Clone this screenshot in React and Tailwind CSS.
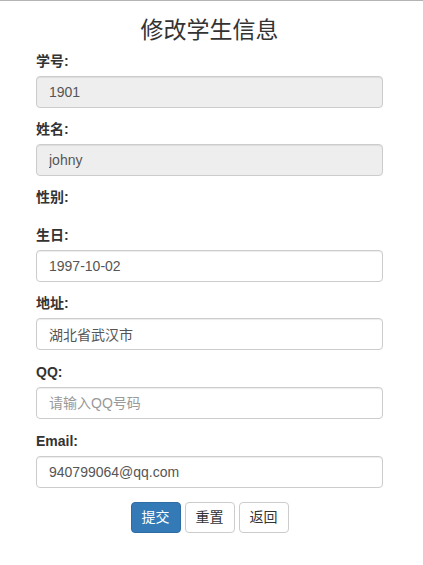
import React from "react";

const font = { fontFamily: '"Liberation Sans", Arial, "Noto Sans CJK SC", sans-serif' };

function Label({ children }) {
  return (
    <div className="h-[20px] leading-[20px] mb-[5px] text-[14px] font-bold text-[#333]">{children}</div>
  );
}

function Input({ value, placeholder, disabled }) {
  return (
    <input
      readOnly
      defaultValue={value}
      placeholder={placeholder}
      className={
        "block w-full h-[32px] px-[12px] text-[14px] text-[#555] placeholder:text-[#999] border border-[#ccc] rounded-[4px] outline-none shadow-[inset_0_1px_1px_rgba(0,0,0,0.075)] " +
        (disabled ? "bg-[#eee]" : "bg-white")
      }
      style={font}
    />
  );
}

export default function App() {
  return (
    <div className="w-[423px] min-h-[565px] bg-white border-t border-[#b4b4b4]" style={font}>
      <div className="ml-[36px] w-[347px]">
        <h3 className="pt-[17px] h-[42px] leading-[25px] mb-[8px] text-center text-[23px] font-normal text-[#333]">
          修改学生信息
        </h3>
        <div className="mb-[11px]">
          <Label>学号:</Label>
          <Input value="1901" disabled />
        </div>
        <div className="mb-[11px]">
          <Label>姓名:</Label>
          <Input value="johny" disabled />
        </div>
        <div className="h-[38px]">
          <div className="h-[20px] leading-[20px] text-[14px] font-bold text-[#333]">性别:</div>
        </div>
        <div className="mb-[11px]">
          <Label>生日:</Label>
          <Input value="1997-10-02" />
        </div>
        <div className="mb-[12px]">
          <Label>地址:</Label>
          <Input value="湖北省武汉市" />
        </div>
        <div className="mb-[12px]">
          <Label>QQ:</Label>
          <Input placeholder="请输入QQ号码" />
        </div>
        <div className="mb-[14px]">
          <Label>Email:</Label>
          <Input value="940799064@qq.com" />
        </div>
        <div className="flex justify-center gap-[4px]">
          <button className="w-[50px] h-[31px] text-[14px] text-white bg-[#337ab7] border border-[#2e6da4] rounded-[4px]">
            提交
          </button>
          <button className="w-[50px] h-[31px] text-[14px] text-[#333] bg-white border border-[#ccc] rounded-[4px]">
            重置
          </button>
          <button className="w-[50px] h-[31px] text-[14px] text-[#333] bg-white border border-[#ccc] rounded-[4px]">
            返回
          </button>
        </div>
      </div>
    </div>
  );
}
